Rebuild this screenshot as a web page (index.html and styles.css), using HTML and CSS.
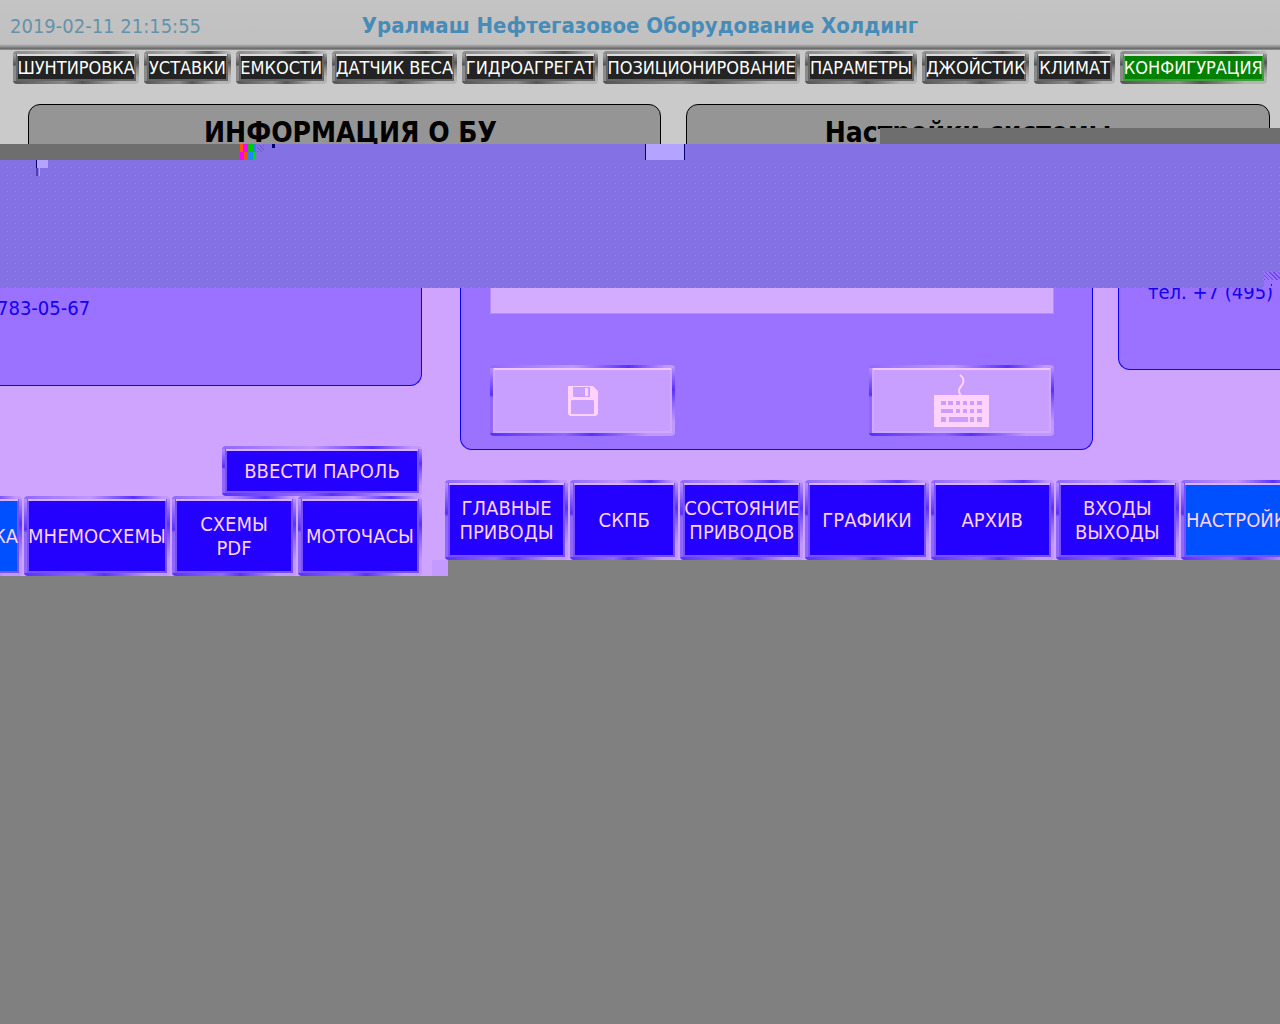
FILE: index.html
```html
<!DOCTYPE html>
<html lang="ru">
<head>
<meta charset="utf-8">
<meta name="viewport" content="width=device-width, initial-scale=1">
<title>Уралмаш Нефтегазовое Оборудование Холдинг</title>
<link rel="stylesheet" href="styles.css">
</head>
<body>
<div class="screen">
  <div class="top">
    <header class="header">
      <time class="clock" datetime="2019-02-11T21:15:55">2019-02-11 21:15:55</time>
      <h1 class="company">Уралмаш Нефтегазовое Оборудование Холдинг</h1>
    </header>
    <nav class="tabs">
      <button class="bevel tab">ШУНТИРОВКА</button>
      <button class="bevel tab">УСТАВКИ</button>
      <button class="bevel tab">ЕМКОСТИ</button>
      <button class="bevel tab">ДАТЧИК ВЕСА</button>
      <button class="bevel tab">ГИДРОАГРЕГАТ</button>
      <button class="bevel tab">ПОЗИЦИОНИРОВАНИЕ</button>
      <button class="bevel tab">ПАРАМЕТРЫ</button>
      <button class="bevel tab">ДЖОЙСТИК</button>
      <button class="bevel tab">КЛИМАТ</button>
      <button class="bevel tab tab-active">КОНФИГУРАЦИЯ</button>
    </nav>
    <div class="titles">
      <h2 class="title-panel title-info">ИНФОРМАЦИЯ О БУ</h2>
      <h2 class="title-panel title-system">Настройки системы</h2>
    </div>
    <div class="strip"></div>
  </div>

  <div class="band">
    <div class="band-start"></div>
    <div class="band-colors"></div>
    <div class="band-noise"></div>
    <div class="band-tick"></div>
    <div class="band-gap"></div>
    <div class="band-corner"></div>
    <div class="band-end"></div>
  </div>

  <main class="work">
    <section class="left">
      <div class="contact-end">783-05-67</div>
      <button class="bevel violet password">ВВЕСТИ ПАРОЛЬ</button>
      <nav class="menu menu-left">
        <button class="bevel violet menu-active cut-start">КА</button>
        <button class="bevel violet">МНЕМОСХЕМЫ</button>
        <button class="bevel violet">СХЕМЫ<br>PDF</button>
        <button class="bevel violet">МОТОЧАСЫ</button>
      </nav>
      <div class="left-corner"></div>
    </section>
    <section class="right">
      <div class="panels">
        <div class="settings">
          <input class="field" type="text" aria-label="Значение">
          <div class="actions">
            <button class="bevel violet action" aria-label="Сохранить">
              <svg width="30" height="30" viewBox="0 0 30 30" aria-hidden="true">
                <path fill="#ffd2ff" fill-rule="evenodd" d="M0 0H25L30 5V28L28 30H2L0 28ZM5 1V10L6 11H22V1ZM3 15V28H26V15L25 14H4Z"/>
                <path fill="#ffd2ff" d="M17 2h3v8h-3z"/>
              </svg>
            </button>
            <button class="bevel violet action" aria-label="Клавиатура">
              <svg width="55" height="54" viewBox="0 0 55 54" aria-hidden="true">
                <path fill="none" stroke="#ffd2ff" stroke-width="2" d="M26 1C29 3 30 6 29 9C28 12 24 14 25 18L27 22"/>
                <path fill="#ffd2ff" d="M0 21h55v32H0z"/>
                <path fill="#c89eff" d="M7 27h5v4H7zM14 27h5v4h-5zM22 27h4v4h-4zM29 27h4v4h-4zM36 27h4v4h-4zM43 27h5v4h-5zM7 35h12v4H7zM22 35h4v4h-4zM29 35h4v4h-4zM36 35h4v4h-4zM43 35h5v4h-5zM7 43h5v5H7zM15 43h19v5H15zM36 43h4v5h-4zM43 43h5v5h-5z"/>
              </svg>
            </button>
          </div>
        </div>
        <div class="contact">тел. +7 (495) 783-05-67</div>
      </div>
      <nav class="menu menu-right">
        <button class="bevel violet">ГЛАВНЫЕ<br>ПРИВОДЫ</button>
        <button class="bevel violet">СКПБ</button>
        <button class="bevel violet">СОСТОЯНИЕ<br>ПРИВОДОВ</button>
        <button class="bevel violet">ГРАФИКИ</button>
        <button class="bevel violet">АРХИВ</button>
        <button class="bevel violet">ВХОДЫ<br>ВЫХОДЫ</button>
        <button class="bevel violet menu-active">НАСТРОЙКА</button>
      </nav>
    </section>
  </main>
</div>
</body>
</html>
```
FILE: styles.css
```css
* { box-sizing: border-box; }

body {
  margin: 0;
  min-height: 100vh;
  background: #808080;
  font-family: "DejaVu Sans Condensed", "DejaVu Sans", sans-serif;
  font-stretch: condensed;
  font-size: 20px;
  line-height: 24px;
}

h1, h2 { margin: 0; }

.screen { overflow: hidden; }

/* Bevelled metal frame shared by every button */
.bevel {
  --lo: #555;
  --mid: #8a8a8a;
  --hi: #b4b4b4;
  --line: #dcdcdc;
  --rim: #666;
  --face: #232323;
  border: 0;
  border-radius: 4px;
  padding: 0;
  font: inherit;
  white-space: nowrap;
  display: flex;
  align-items: center;
  justify-content: center;
  background:
    linear-gradient(var(--line), var(--line)) 4px 3px / calc(100% - 8px) 2px no-repeat,
    linear-gradient(var(--face), var(--face)) 5px 5px / calc(100% - 10px) calc(100% - 10px) no-repeat,
    linear-gradient(var(--rim), var(--rim)) 3px 3px / calc(100% - 6px) calc(100% - 6px) no-repeat,
    linear-gradient(90deg, var(--mid), var(--hi) 45%, var(--lo) 75%, var(--hi) 95%) 0 0 / 100% 3px no-repeat,
    linear-gradient(90deg, var(--lo), var(--mid) 40%, var(--lo) 55%, var(--hi) 85%) 0 100% / 100% 3px no-repeat,
    linear-gradient(var(--hi), var(--mid) 20%, var(--lo) 42%, var(--mid) 46%, var(--mid)) 0 0 / 3px 100% no-repeat,
    linear-gradient(var(--hi), var(--lo) 35%, var(--mid) 55%, var(--hi) 80%) 100% 0 / 3px 100% no-repeat;
}

.top {
  position: relative;
  height: 144px;
  overflow: hidden;
  background: #cacaca;
}

.header {
  position: relative;
  display: flex;
  align-items: center;
  justify-content: center;
  height: 50px;
  padding-top: 2px;
  background: linear-gradient(#c4c4c4, #c0c0c0 44px, #999 46px, #666 49px, #aaa);
}

.clock {
  position: absolute;
  left: 10px;
  color: #6592ab;
}

.company {
  font-size: 22px;
  color: #468cb9;
}

.tabs {
  display: grid;
  grid-template-columns: 126fr 86fr 91fr 125fr 136fr 196fr 112fr 107fr 80fr 147fr;
  gap: 5px;
  padding: 1px 13px 0;
}

.tab {
  height: 33px;
  min-width: 0;
  font-size: 18px;
  color: #fff;
}

.tab-active { --face: #008200; --rim: #3fa03f; }

.titles {
  display: grid;
  grid-template-columns: 633fr 584fr;
  gap: 25px;
  padding: 20px 10px 0 28px;
}

.title-panel {
  height: 60px;
  padding-top: 12px;
  border: 1px solid #000;
  border-radius: 12px;
  background: #959595;
  font-size: 28px;
  line-height: 32px;
  text-align: center;
}

.title-info { padding-left: 12px; }
.title-system { padding-right: 20px; }

.strip {
  position: absolute;
  left: 880px;
  right: 0;
  bottom: 0;
  height: 16px;
  background: #6e6e6e;
}

.band {
  position: relative;
  height: 144px;
  background:
    linear-gradient(#8472e4, #8472e4) 0 0 / 100% 16px no-repeat,
    conic-gradient(from 90deg at 7px 7px, #9482ec 0 25%, transparent 0) 0 0 / 8px 8px,
    #8472e4;
}

.band > div { position: absolute; }

.band-start {
  left: 0;
  top: 0;
  width: 240px;
  height: 16px;
  background: #6e6e6e;
}

.band-colors {
  left: 240px;
  top: 0;
  width: 16px;
  height: 16px;
  background:
    linear-gradient(90deg, #f50 3px, #f0f 3px 8px, #00c800 8px 14px, #28f 14px) 0 0 / 16px 8px no-repeat,
    linear-gradient(90deg, #f0f 4px, #e50 4px 8px, #28f 8px 13px, #0d0 13px) 0 8px / 16px 8px no-repeat;
}

.band-noise {
  left: 257px;
  top: 1px;
  width: 7px;
  height: 7px;
  background: repeating-linear-gradient(45deg, #6554c0 0 1px, #8472e4 1px 3px);
}

.band-tick {
  left: 272px;
  top: 0;
  width: 3px;
  height: 4px;
  background: #000070;
}

.band-gap {
  left: 645px;
  top: 0;
  width: 40px;
  height: 16px;
  border: solid #000070;
  border-width: 0 1px;
  background: #b4a4ff;
}

.band-corner {
  left: 36px;
  top: 16px;
  width: 12px;
  height: 16px;
  background:
    linear-gradient(90deg, #000070 1px, #b4a4ff 1px) 0 0 / 12px 8px no-repeat,
    linear-gradient(90deg, #5040b0 2px, #8472e4 2px 3px, #b4a4ff 3px) 0 8px / 4px 8px no-repeat;
}

.band-end {
  right: 0;
  bottom: 0;
  width: 16px;
  height: 16px;
  background:
    repeating-linear-gradient(45deg, #6a48e8 0 1px, #9a74ff 1px 3px) 0 0 / 16px 8px no-repeat,
    linear-gradient(#2000ff, #2000ff) 7px 12px / 1px 2px no-repeat,
    #9a74ff;
}

/* Working area below the band */
.work {
  display: grid;
  grid-template-columns: 444fr 836fr;
  align-items: start;
}

.violet {
  --lo: #5830ff;
  --mid: #9068ff;
  --hi: #c098ff;
  --line: #d8b0ff;
  --rim: #7850ff;
  --face: #2400ff;
  color: #ffd2ff;
}

.left, .right {
  position: relative;
  min-width: 0;
  background: #cfa4ff;
}

.left {
  display: flex;
  flex-direction: column;
  padding-right: 22px;
}

.contact-end {
  height: 98px;
  margin-bottom: 60px;
  padding-top: 8px;
  border: solid #0c00f4;
  border-width: 0 1px 1px 0;
  border-radius: 0 0 12px 0;
  background: #9a72ff;
  color: #1400f0;
  text-indent: -3px;
}

.password {
  align-self: flex-end;
  width: 200px;
  height: 50px;
}

.menu {
  display: grid;
  gap: 2px;
}

.menu .bevel { height: 80px; min-width: 0; }

.menu .menu-active { --face: #0050ff; }

.menu-left { grid-template-columns: 22fr 146fr 124fr 124fr; }

.cut-start {
  margin-left: -100px;
  justify-content: flex-end;
  padding-right: 4px;
}

.left-corner {
  position: absolute;
  right: -4px;
  bottom: 0;
  width: 16px;
  height: 16px;
  background: #c49aff;
}

.panels {
  display: grid;
  grid-template-columns: 633fr 162fr;
  gap: 25px;
  align-items: start;
  padding-left: 16px;
  margin-bottom: 30px;
}

.settings {
  height: 162px;
  padding: 0 38px 0 29px;
  border: solid #0c00f4;
  border-width: 0 1px 1px;
  border-radius: 0 0 12px 12px;
  background: #9a72ff;
}

.field {
  display: block;
  width: 100%;
  height: 26px;
  border: solid #b48cff;
  border-width: 0 1px 1px;
  padding: 0 8px;
  background: #d4acff;
  font: inherit;
}

.actions {
  display: flex;
  justify-content: space-between;
  margin-top: 51px;
}

.action {
  --face: #c89eff;
  --rim: #d0a8ff;
  --line: #f0c8ff;
  width: 185px;
  height: 71px;
}

.contact {
  min-width: 0;
  height: 82px;
  overflow: hidden;
  border: solid #0c00f4;
  border-width: 0 0 1px 1px;
  border-radius: 0 0 0 12px;
  padding-left: 29px;
  background: #9a72ff;
  color: #1400f0;
  line-height: 8px;
  white-space: nowrap;
}

.menu-right {
  grid-template-columns: 123fr 108fr 123fr 123fr 123fr 123fr 123fr;
  width: calc(100% + 24px);
  padding-left: 1px;
}
```
